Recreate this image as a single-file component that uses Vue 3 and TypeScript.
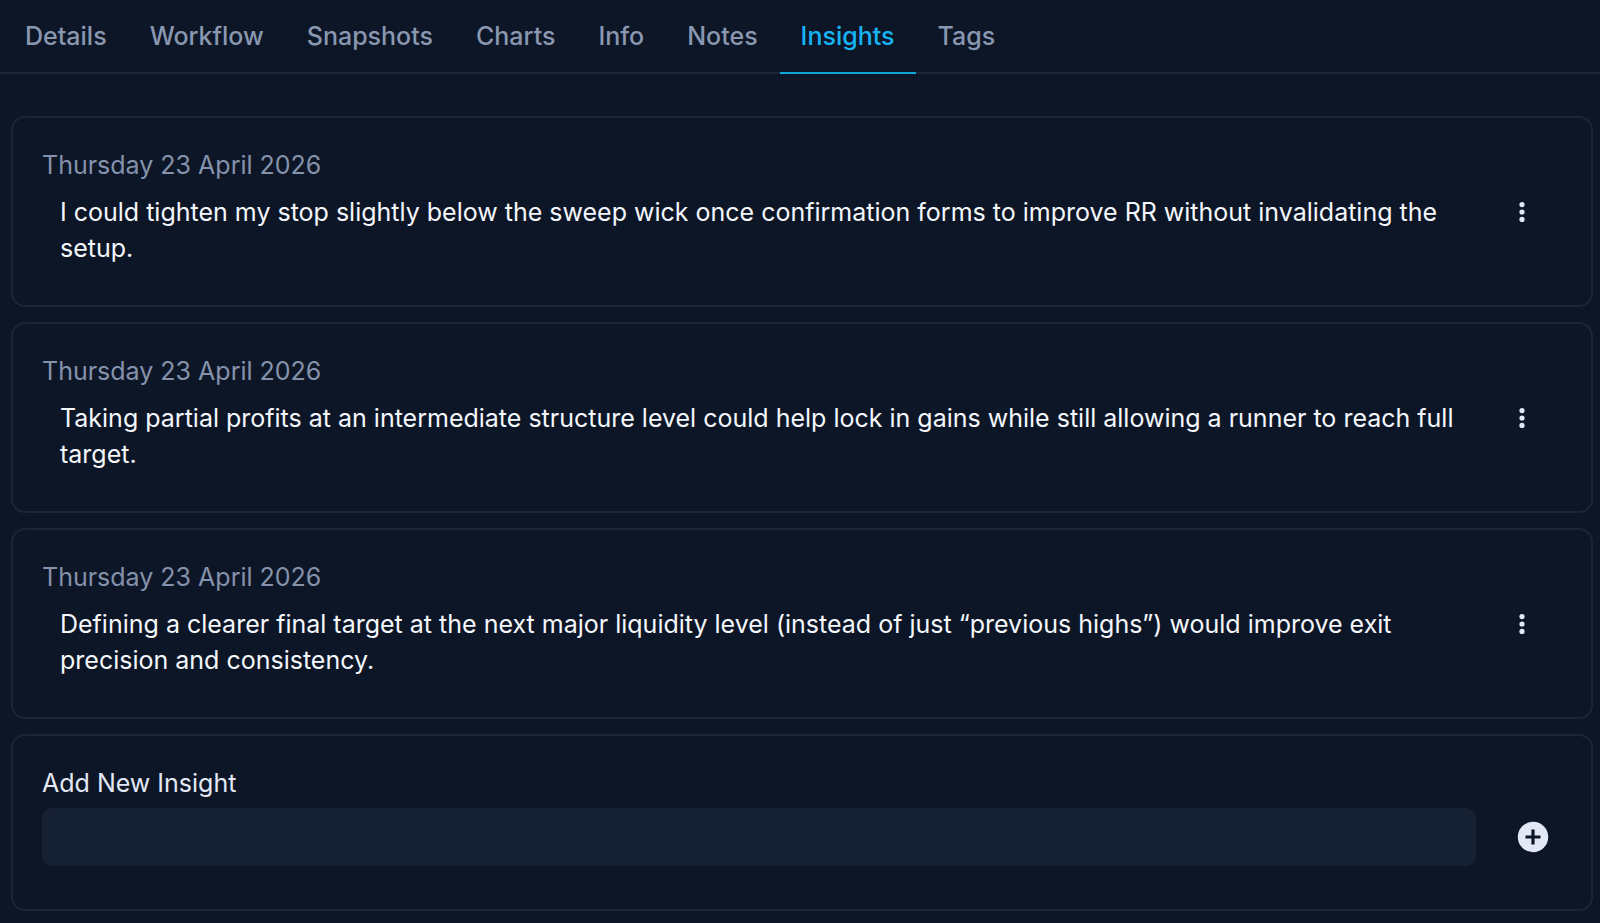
<script setup lang="ts">
import { ref } from 'vue'

interface Insight {
  id: number
  date: string
  text: string
}

const tabs: string[] = ['Details', 'Workflow', 'Snapshots', 'Charts', 'Info', 'Notes', 'Insights', 'Tags']
const active = ref<string>('Insights')
const draft = ref<string>('')

const insights = ref<Insight[]>([
  {
    id: 1,
    date: 'Thursday 23 April 2026',
    text: 'I could tighten my stop slightly below the sweep wick once confirmation forms to improve RR without invalidating the setup.',
  },
  {
    id: 2,
    date: 'Thursday 23 April 2026',
    text: 'Taking partial profits at an intermediate structure level could help lock in gains while still allowing a runner to reach full target.',
  },
  {
    id: 3,
    date: 'Thursday 23 April 2026',
    text: 'Defining a clearer final target at the next major liquidity level (instead of just “previous highs”) would improve exit precision and consistency.',
  },
])

function addInsight(): void {
  const text = draft.value.trim()
  if (!text) return
  const date = insights.value[0].date
  insights.value.push({ id: insights.value.length + 1, date, text })
  draft.value = ''
}
</script>

<template>
  <div class="page">
    <nav class="tabs" role="tablist">
      <button
        v-for="tab in tabs"
        :key="tab"
        type="button"
        role="tab"
        class="tab"
        :class="{ active: tab === active }"
        :aria-selected="tab === active"
        @click="active = tab"
      >{{ tab }}</button>
    </nav>

    <main class="list">
      <article v-for="item in insights" :key="item.id" class="card">
        <div class="date">{{ item.date }}</div>
        <div class="row">
          <p class="text">{{ item.text }}</p>
          <button type="button" class="icon-button menu" aria-label="Insight options">
            <svg width="24" height="24" viewBox="0 0 24 24" fill="currentColor" aria-hidden="true">
              <circle cx="12" cy="4.6" r="2.6" />
              <circle cx="12" cy="12" r="2.6" />
              <circle cx="12" cy="19.4" r="2.6" />
            </svg>
          </button>
        </div>
      </article>

      <form class="card add" @submit.prevent="addInsight">
        <label class="label" for="new-insight">Add New Insight</label>
        <div class="add-row">
          <input id="new-insight" v-model="draft" class="input" type="text" />
          <button type="submit" class="icon-button plus" aria-label="Add insight">
            <svg width="32" height="32" viewBox="0 0 32 32" aria-hidden="true">
              <circle cx="16" cy="16" r="15.2" fill="currentColor" />
              <path d="M16 8.5v15M8.5 16h15" stroke="#0d1627" stroke-width="3.2" />
            </svg>
          </button>
        </div>
      </form>
    </main>
  </div>
</template>

<style>
body {
  background: #0d1627;
}
</style>

<style scoped>
.page {
  box-sizing: border-box;
  min-height: 100vh;
  background: #0d1627;
  color: #e2e8f5;
  font-family: Inter, 'Liberation Sans', sans-serif;
  font-size: 25px;
  line-height: 36px;
}

.tabs {
  display: flex;
  gap: 1px;
  padding: 0 4px;
  border-bottom: 2px solid #1b2536;
}

.tab {
  margin: 0 0 -2px;
  padding: 18px 21px;
  border: 0;
  border-bottom: 2px solid transparent;
  background: none;
  color: #8a97b0;
  font: inherit;
  font-weight: 500;
  cursor: pointer;
}

.tab.active {
  border-bottom-color: #0ea5d8;
  color: #16b4f5;
}

.list {
  display: flex;
  flex-direction: column;
  gap: 15px;
  padding: 42px 7px 12px 11px;
}

.card {
  box-sizing: border-box;
  padding: 29px 29px 39px;
  border: 2px solid #1b2536;
  border-radius: 14px;
}

.card.add {
  padding-bottom: 43px;
}

.date {
  color: #8592ab;
}

.row {
  display: flex;
  align-items: flex-start;
  gap: 32px;
  padding: 11px 24px 0 18px;
}

.text {
  flex: 1;
  margin: 0;
  color: #f4f7fb;
}

.icon-button {
  display: flex;
  align-items: center;
  justify-content: center;
  padding: 0;
  border: 0;
  background: none;
  color: #e2e8f5;
  cursor: pointer;
}

.menu {
  width: 32px;
  height: 36px;
}

.label {
  display: block;
}

.add-row {
  display: flex;
  align-items: center;
  gap: 41px;
  padding: 7px 13px 0 0;
}

.input {
  box-sizing: border-box;
  flex: 1;
  min-width: 0;
  height: 58px;
  padding: 0 16px;
  border: 0;
  border-radius: 10px;
  background: #152033;
  color: #e2e8f5;
  font: inherit;
}
</style>
